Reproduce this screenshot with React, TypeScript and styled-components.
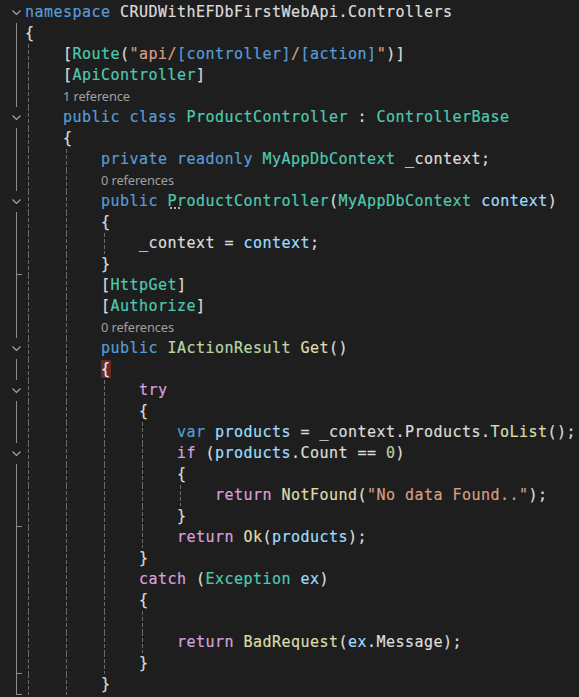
import React from 'react';
import styled, { createGlobalStyle, css } from 'styled-components';

const Global = createGlobalStyle`
  html, body { margin: 0; padding: 0; background: #1e1e1e; overflow: hidden; }
  #root { background: #1e1e1e; }
`;

type Kind = 'kw' | 'ctl' | 'type' | 'iface' | 'fn' | 'var' | 'str' | 'num' | 'pl' | 'route' | 'brace' | 'dots';
type Tok = [string, Kind];
type Fold = 'none' | 'chev' | 'line' | 'end';
type Line = { fold: Fold; guides: number[]; toks?: Tok[]; lens?: string; lensIndent?: number };

const COLORS: Record<Kind, string> = {
  kw: '#569cd6',
  ctl: '#d8a0df',
  type: '#4ec9b0',
  iface: '#b8d7a3',
  fn: '#dcdcaa',
  var: '#9cdcfe',
  str: '#d69d85',
  num: '#b5cea8',
  pl: '#dcdcdc',
  route: '#569cd6',
  brace: '#e8e8e8',
  dots: '#4ec9b0',
};

const CHAR = 9.5;

const Editor = styled.div`
  display: flex;
  flex-direction: column;
  padding-top: 2px;
  width: 579px;
  height: 697px;
  overflow: hidden;
  background: #1e1e1e;
`;

const Row = styled.div`
  display: flex;
  height: 21px;
  flex: none;
`;

const Gutter = styled.div<{ $fold: Fold }>`
  position: relative;
  width: 25px;
  flex: none;
  display: flex;
  align-items: center;
  padding-left: 12px;
  box-sizing: border-box;
  ${(p) =>
    (p.$fold === 'line' || p.$fold === 'end') &&
    css`
      &::before {
        content: '';
        position: absolute;
        left: 16px;
        top: 0;
        bottom: 0;
        width: 1px;
        background: #8c8c8c;
      }
    `}
  ${(p) =>
    p.$fold === 'end' &&
    css`
      &::after {
        content: '';
        position: absolute;
        left: 16px;
        bottom: 0;
        width: 6px;
        height: 1px;
        background: #8c8c8c;
      }
    `}
`;

const Chevron = styled.svg`
  width: 9px;
  height: 5px;
  display: block;
  overflow: visible;
  polyline {
    fill: none;
    stroke: #a8a8a8;
    stroke-width: 1.1;
  }
`;

const Code = styled.div`
  position: relative;
  flex: 1;
  white-space: pre;
  font-family: 'DejaVu Sans Mono', 'Liberation Mono', monospace;
  font-size: 15px;
  letter-spacing: 0.47px;
  line-height: 21px;
  color: #dcdcdc;
  -webkit-text-stroke: 0.2px currentColor;
`;

const Guide = styled.span<{ $col: number }>`
  position: absolute;
  top: 0;
  bottom: 0;
  left: ${(p) => p.$col * CHAR + 3}px;
  width: 1px;
  background-image: repeating-linear-gradient(to bottom, #6a6a6a 0 4px, transparent 4px 6px);
`;

const Tk = styled.span<{ $k: Kind }>`
  color: ${(p) => COLORS[p.$k]};
  ${(p) =>
    p.$k === 'brace' &&
    css`
      background: #6b2a2a;
      padding: 0 0.5px;
      margin: 0 -0.5px;
    `}
  ${(p) =>
    p.$k === 'dots' &&
    css`
      position: relative;
      &::after {
        content: '';
        position: absolute;
        left: 1px;
        top: 15px;
        width: 12px;
        height: 2px;
        background-image: radial-gradient(circle, #b0b0b0 0.8px, transparent 1.1px);
        background-size: 4px 2px;
      }
    `}
`;

const Lens = styled.div<{ $indent: number }>`
  padding-left: ${(p) => p.$indent * CHAR}px;
  font-family: 'Noto Sans', 'Open Sans', sans-serif;
  font-size: 12.8px;
  letter-spacing: -0.1px;
  line-height: 21px;
  padding-top: 0px;
  color: #a0a0a0;
  white-space: pre;
  -webkit-text-stroke: 0;
`;

const sp = (n: number): Tok => [' '.repeat(n), 'pl'];

const LINES: Line[] = [
  { fold: 'chev', guides: [], toks: [['namespace', 'kw'], [' CRUDWithEFDbFirstWebApi.Controllers', 'pl']] },
  { fold: 'line', guides: [], toks: [['{', 'pl']] },
  {
    fold: 'line',
    guides: [0],
    toks: [sp(4), ['[', 'pl'], ['Route', 'type'], ['(', 'pl'], ['"api/', 'str'], ['[controller]', 'route'], ['/', 'str'], ['[action]', 'route'], ['"', 'str'], [')]', 'pl']],
  },
  { fold: 'line', guides: [0], toks: [sp(4), ['[', 'pl'], ['ApiController', 'type'], [']', 'pl']] },
  { fold: 'line', guides: [0], lens: '1 reference', lensIndent: 4 },
  { fold: 'chev', guides: [0], toks: [sp(4), ['public class', 'kw'], [' ', 'pl'], ['ProductController', 'type'], [' : ', 'pl'], ['ControllerBase', 'type']] },
  { fold: 'line', guides: [0], toks: [sp(4), ['{', 'pl']] },
  { fold: 'line', guides: [0, 4], toks: [sp(8), ['private readonly', 'kw'], [' ', 'pl'], ['MyAppDbContext', 'type'], [' _context;', 'pl']] },
  { fold: 'line', guides: [0, 4], lens: '0 references', lensIndent: 8 },
  {
    fold: 'chev',
    guides: [0, 4],
    toks: [sp(8), ['public', 'kw'], [' ', 'pl'], ['P', 'dots'], ['roductController', 'type'], ['(', 'pl'], ['MyAppDbContext', 'type'], [' ', 'pl'], ['context', 'var'], [')', 'pl']],
  },
  { fold: 'line', guides: [0, 4], toks: [sp(8), ['{', 'pl']] },
  { fold: 'line', guides: [0, 4, 8], toks: [sp(12), ['_context = ', 'pl'], ['context', 'var'], [';', 'pl']] },
  { fold: 'end', guides: [0, 4], toks: [sp(8), ['}', 'pl']] },
  { fold: 'line', guides: [0, 4], toks: [sp(8), ['[', 'pl'], ['HttpGet', 'type'], [']', 'pl']] },
  { fold: 'line', guides: [0, 4], toks: [sp(8), ['[', 'pl'], ['Authorize', 'type'], [']', 'pl']] },
  { fold: 'line', guides: [0, 4], lens: '0 references', lensIndent: 8 },
  { fold: 'chev', guides: [0, 4], toks: [sp(8), ['public', 'kw'], [' ', 'pl'], ['IActionResult', 'iface'], [' ', 'pl'], ['Get', 'fn'], ['()', 'pl']] },
  { fold: 'line', guides: [0, 4], toks: [sp(8), ['{', 'brace']] },
  { fold: 'chev', guides: [0, 4, 8], toks: [sp(12), ['try', 'ctl']] },
  { fold: 'line', guides: [0, 4, 8], toks: [sp(12), ['{', 'pl']] },
  {
    fold: 'line',
    guides: [0, 4, 8, 12],
    toks: [sp(16), ['var', 'kw'], [' ', 'pl'], ['products', 'var'], [' = _context.Products.', 'pl'], ['ToList', 'fn'], ['();', 'pl']],
  },
  {
    fold: 'chev',
    guides: [0, 4, 8, 12],
    toks: [sp(16), ['if', 'ctl'], [' (', 'pl'], ['products', 'var'], ['.Count == ', 'pl'], ['0', 'num'], [')', 'pl']],
  },
  { fold: 'line', guides: [0, 4, 8, 12], toks: [sp(16), ['{', 'pl']] },
  {
    fold: 'line',
    guides: [0, 4, 8, 12, 16],
    toks: [sp(20), ['return', 'ctl'], [' ', 'pl'], ['NotFound', 'fn'], ['(', 'pl'], ['"No data Found.."', 'str'], [');', 'pl']],
  },
  { fold: 'end', guides: [0, 4, 8, 12], toks: [sp(16), ['}', 'pl']] },
  {
    fold: 'line',
    guides: [0, 4, 8, 12],
    toks: [sp(16), ['return', 'ctl'], [' ', 'pl'], ['Ok', 'fn'], ['(', 'pl'], ['products', 'var'], [');', 'pl']],
  },
  { fold: 'line', guides: [0, 4, 8], toks: [sp(12), ['}', 'pl']] },
  { fold: 'line', guides: [0, 4, 8], toks: [sp(12), ['catch', 'ctl'], [' (', 'pl'], ['Exception', 'type'], [' ', 'pl'], ['ex', 'var'], [')', 'pl']] },
  { fold: 'line', guides: [0, 4, 8], toks: [sp(12), ['{', 'pl']] },
  { fold: 'line', guides: [0, 4, 8, 12], toks: [] },
  {
    fold: 'line',
    guides: [0, 4, 8, 12],
    toks: [sp(16), ['return', 'ctl'], [' ', 'pl'], ['BadRequest', 'fn'], ['(', 'pl'], ['ex', 'var'], ['.Message);', 'pl']],
  },
  { fold: 'end', guides: [0, 4, 8], toks: [sp(12), ['}', 'pl']] },
  { fold: 'end', guides: [0, 4], toks: [sp(8), ['}', 'pl']] },
];

export default function App() {
  return (
    <>
      <Global />
      <Editor>
        {LINES.map((line, i) => (
          <Row key={i}>
            <Gutter $fold={line.fold}>
              {line.fold === 'chev' && (
                <Chevron viewBox="0 0 9 5">
                  <polyline points="0.5,0.5 4.5,4.5 8.5,0.5" />
                </Chevron>
              )}
            </Gutter>
            <Code>
              {line.guides.map((g) => (
                <Guide key={g} $col={g} />
              ))}
              {line.lens ? (
                <Lens $indent={line.lensIndent ?? 0}>{line.lens}</Lens>
              ) : (
                line.toks?.map((t, j) => (
                  <Tk key={j} $k={t[1]}>
                    {t[0]}
                  </Tk>
                ))
              )}
            </Code>
          </Row>
        ))}
      </Editor>
    </>
  );
}
